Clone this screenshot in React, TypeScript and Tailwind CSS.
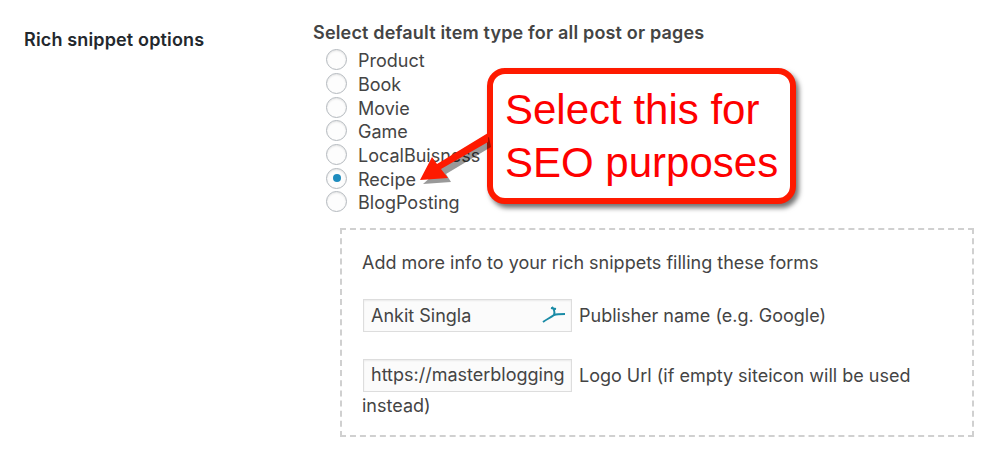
const itemTypes = ['Product', 'Book', 'Movie', 'Game', 'LocalBuisness', 'Recipe', 'BlogPosting'];

function Radio({ checked }: { checked: boolean }) {
  return (
    <span className="flex h-[21px] w-[21px] shrink-0 items-center justify-center rounded-full border border-[#b4b9be] bg-[#fdfdfd] shadow-[inset_0_1px_2px_rgba(0,0,0,0.1)]">
      {checked && <span className="h-[8px] w-[8px] rounded-full bg-[#1e8cbe]" />}
    </span>
  );
}

function Callout() {
  return (
    <>
      <div className="absolute left-[487px] top-[68px] flex h-[136px] w-[309px] flex-col justify-center rounded-[18px] border-[6px] border-[#fe1a00] bg-white pb-[1px] pl-[12px] font-['Liberation_Sans',Arial,sans-serif] text-[42px] leading-[53px] text-[#fe0000] shadow-[3px_4px_5px_rgba(0,0,0,0.55)]">
        <div>Select this for</div>
        <div>SEO purposes</div>
      </div>
      <svg className="absolute left-[410px] top-[125px]" width="90" height="70" viewBox="0 0 90 70">
        <path d="M78 18 L33 45 L38 53 L10 55 L28 39 L76 8 Z" fill="#000" opacity="0.4" transform="translate(3 4)" />
        <path d="M78 17 L31 44 L38 53 L10 55 L22 32 L27 39 L78 8 Z" fill="#fe1a00" />
      </svg>
    </>
  );
}

export default function App() {
  return (
    <div className="relative flex h-[461px] w-[1000px] overflow-hidden bg-white font-['Inter',Arial,sans-serif] text-[18px] text-[#444]">
      <div className="w-[290px] shrink-0 pl-[24px] pt-[28px] font-semibold leading-[24px] tracking-[0.15px] text-[#23282d]">Rich snippet options</div>
      <div className="flex-1 pl-[23px] pt-[21px]">
        <div className="font-semibold leading-[24px] tracking-[0.17px]">Select default item type for all post or pages</div>
        <div className="mt-[3px] flex flex-col pl-[13px]">
          {itemTypes.map((name) => (
            <label key={name} className="flex h-[23.7px] items-center gap-[11px]">
              <Radio checked={name === 'Recipe'} />
              <span className="pt-[2px]">{name}</span>
            </label>
          ))}
        </div>
        <div className="ml-[27px] mt-[14px] h-[209px] w-[634px] border-2 border-dashed border-[#d0d0d0] pl-[20px] pr-[20px] pt-[21px]">
          <p className="leading-[24px]">Add more info to your rich snippets filling these forms</p>
          <div className="ml-[1px] mt-[24px] flex items-baseline gap-[7px]">
            <div className="flex h-[33px] w-[209px] items-center justify-between border border-[#ddd] bg-[#fbfbfb] pl-[7px] pr-[5px] shadow-[inset_0_1px_2px_rgba(0,0,0,0.07)]">
              <span>Ankit Singla</span>
              <svg width="24" height="18" viewBox="0 0 24 18" fill="none" stroke="#1a8ba6" strokeWidth="2">
                <path d="M1 16 C5 13 8 12 12 9 C15 8 19 8 23 8" />
                <path d="M12 9 C13 6 12 3 10 1 M9 2 L14 3" />
              </svg>
            </div>
            <span className="leading-[24px]">Publisher name (e.g. Google)</span>
          </div>
          <div className="mt-[27px] leading-[28px]">
            <span className="ml-[1px] mr-[7px] inline-flex h-[33px] w-[209px] items-center overflow-hidden border border-[#ddd] bg-[#fbfbfb] pl-[7px] align-baseline shadow-[inset_0_1px_2px_rgba(0,0,0,0.07)]">https://masterblogging</span>
            Logo Url (if empty siteicon will be used instead)
          </div>
        </div>
      </div>
      <Callout />
    </div>
  );
}
